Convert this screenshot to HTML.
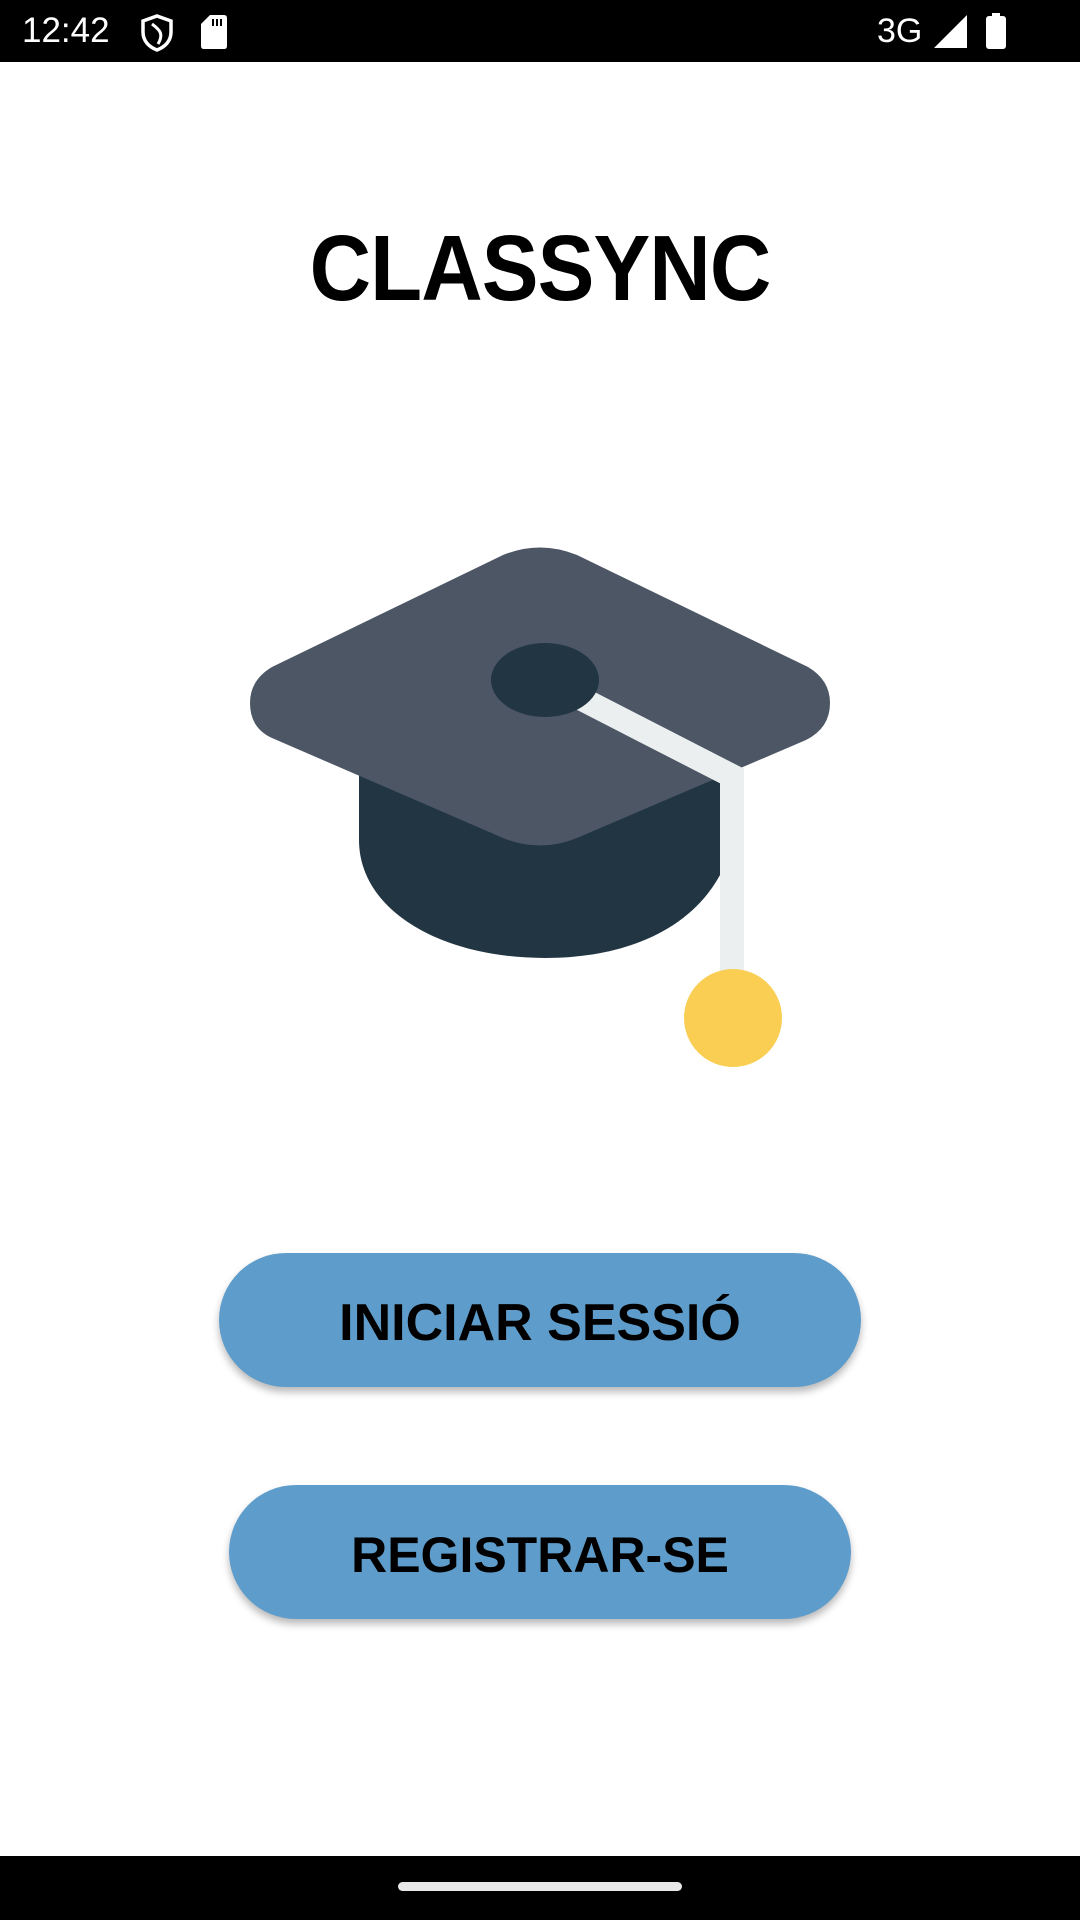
<!DOCTYPE html>
<html><head><meta charset="utf-8"><style>
html,body{margin:0;padding:0;}
body{width:1080px;height:1920px;background:#fff;position:relative;overflow:hidden;font-family:"Liberation Sans",sans-serif;}
.sb{position:absolute;left:0;top:0;width:1080px;height:62px;background:#000;color:#fff;}
.nav{position:absolute;left:0;top:1856px;width:1080px;height:64px;background:#000;}
.pill{position:absolute;left:398px;top:26px;width:284px;height:9px;border-radius:5px;background:#e8e8e8;}
.title{position:absolute;left:0;width:1080px;top:218px;text-align:center;font-weight:900;font-size:93px;line-height:100px;color:#000;transform:scaleX(0.915);letter-spacing:-1px;}
.btn{position:absolute;background:#5e9dcb;border-radius:67px;height:134px;box-shadow:0 5px 8px rgba(0,0,0,0.28);text-align:center;line-height:140px;font-weight:bold;font-size:52px;color:#000;}
</style></head><body>
<div class="sb">
<div style="position:absolute;left:22px;top:11px;font-size:35px;line-height:40px;">12:42</div>
<svg style="position:absolute;left:140px;top:14px" width="34" height="38" viewBox="0 0 34 38"><path d="M17 2 L31 7 V18 C31 27 25 33 17 36 C9 33 3 27 3 18 V7 Z" fill="none" stroke="#fff" stroke-width="3.5"/><path d="M12 10 C20 16 24 20 18 30" fill="none" stroke="#fff" stroke-width="3"/></svg>
<svg style="position:absolute;left:201px;top:15px" width="26" height="34" viewBox="0 0 26 34"><path d="M9 0 H23 Q26 0 26 3 V31 Q26 34 23 34 H3 Q0 34 0 31 V9 Z" fill="#fff"/><rect x="11" y="4" width="2" height="7" fill="#000"/><rect x="15" y="4" width="2" height="7" fill="#000"/><rect x="19" y="4" width="2" height="7" fill="#000"/></svg>
<div style="position:absolute;left:877px;top:11px;font-size:34px;line-height:40px;">3G</div>
<svg style="position:absolute;left:934px;top:15px" width="33" height="33"><path d="M33 0 V33 H0 Z" fill="#fff"/></svg>
<svg style="position:absolute;left:986px;top:13px" width="20" height="36"><rect x="6" y="0" width="8" height="4" fill="#fff"/><rect x="0" y="3" width="20" height="33" rx="3" fill="#fff"/></svg>
</div>
<div class="title">CLASSYNC</div>
<svg style="position:absolute;left:0;top:0" width="1080" height="1200" viewBox="0 0 1080 1200">
<path d="M359 760 V840 C359 910 440 958 545 958 C625 958 690 930 720 875 V760 Z" fill="#223543"/>
<path d="M503 555 Q540 540 577 555 L808 667 Q830 680 830 703 Q830 728 806 740 L577 838 Q540 853 503 838 L272 738 Q250 728 250 703 Q250 680 272 667 Z" fill="#4c5665"/>
<path d="M545 680 L732 776 V1000" fill="none" stroke="#ebeff0" stroke-width="24" stroke-linejoin="miter"/>
<ellipse cx="545" cy="680" rx="54" ry="37" fill="#223543"/>
<ellipse cx="733" cy="1018" rx="49" ry="49" fill="#f9ce53"/>
</svg>
<div class="btn" style="left:219px;top:1253px;width:642px;">INICIAR SESSIÓ</div>
<div class="btn" style="left:229px;top:1485px;width:622px;font-size:50px;">REGISTRAR-SE</div>
<div class="nav"><div class="pill"></div></div>
</body></html>
